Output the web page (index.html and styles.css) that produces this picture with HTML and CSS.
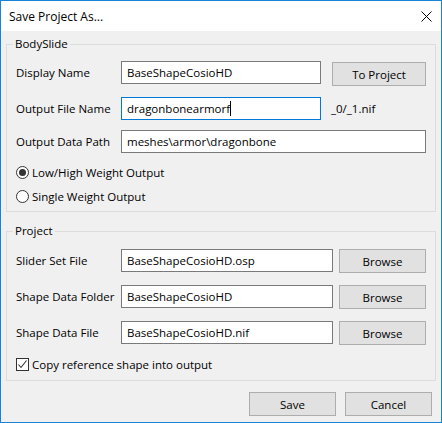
FILE: index.html
```html
<!DOCTYPE html>
<html>
<head>
<meta charset="utf-8">
<link rel="stylesheet" href="styles.css">
</head>
<body>
<div class="window">
  <div class="titlebar">
    <span class="title">Save Project As...</span>
    <svg class="close" width="11" height="11" viewBox="0 0 11 11"><path d="M0.5 0.5L10.5 10.5M10.5 0.5L0.5 10.5" stroke="#000" stroke-width="1" fill="none"/></svg>
  </div>
  <div class="content">
    <fieldset class="group group-bs">
      <legend>BodySlide</legend>
      <div class="row">
        <span class="lbl">Display Name</span>
        <div class="field w200">BaseShapeCosioHD</div>
        <div class="btn btn-toproj">To Project</div>
      </div>
      <div class="row row-2">
        <span class="lbl">Output File Name</span>
        <div class="field field-focus w200">dragonbonearmorf<span class="caret"></span></div>
        <span class="suffix">_0/_1.nif</span>
      </div>
      <div class="row row-3">
        <span class="lbl">Output Data Path</span>
        <div class="field w305">meshes\armor\dragonbone</div>
      </div>
      <div class="radios">
        <div class="opt"><span class="radio radio-on"></span><span>Low/High Weight Output</span></div>
        <div class="opt"><span class="radio"></span><span>Single Weight Output</span></div>
      </div>
    </fieldset>
    <fieldset class="group group-proj">
      <legend>Project</legend>
      <div class="row">
        <span class="lbl">Slider Set File</span>
        <div class="field w212">BaseShapeCosioHD.osp</div>
        <div class="btn btn-browse">Browse</div>
      </div>
      <div class="row row-p">
        <span class="lbl">Shape Data Folder</span>
        <div class="field w212">BaseShapeCosioHD</div>
        <div class="btn btn-browse">Browse</div>
      </div>
      <div class="row row-p">
        <span class="lbl">Shape Data File</span>
        <div class="field w212">BaseShapeCosioHD.nif</div>
        <div class="btn btn-browse">Browse</div>
      </div>
      <div class="opt opt-check">
        <span class="check"><svg width="11" height="11" viewBox="0 0 11 11"><path d="M1.5 5.5L4 8.5L9.5 1.5" stroke="#333" stroke-width="1.1" fill="none"/></svg></span>
        <span>Copy reference shape into output</span>
      </div>
    </fieldset>
    <div class="footer">
      <div class="btn btn-dlg">Save</div>
      <div class="btn btn-dlg">Cancel</div>
    </div>
  </div>
</div>
</body>
</html>
```

FILE: styles.css
```css
html, body {
  margin: 0;
  padding: 0;
}
body {
  font-family: "Open Sans", "Noto Sans", sans-serif;
  font-size: 11.5px;
  color: #000;
}
.window {
  width: 442px;
  height: 423px;
  box-sizing: border-box;
  border: 1px solid #1883d7;
  background: #f0f0f0;
  display: flex;
  flex-direction: column;
}
.titlebar {
  height: 30px;
  background: #fff;
  display: flex;
  align-items: center;
  justify-content: space-between;
  padding: 0 9px 0 8px;
}
.title {
  font-size: 12px;
}
.close {
  display: block;
}
.content {
  padding: 5px 5px 0;
  display: flex;
  flex-direction: column;
}
.group {
  margin: 0;
  min-width: 0;
  border: 1px solid #dcdcdc;
  padding: 9px 9px 3px;
}
.group legend {
  padding: 0 2px;
  margin-left: -3px;
  line-height: 16px;
  height: 16px;
}
.group-proj {
  margin-top: 11px;
  padding-top: 10px;
  padding-bottom: 4px;
}
.row {
  display: flex;
  align-items: flex-start;
  height: 23px;
}
.row-2 { margin-top: 13px; }
.row-3 { margin-top: 10px; }
.row-p { margin-top: 13px; }
.lbl {
  width: 105px;
  flex: none;
  line-height: 23px;
}
.field {
  box-sizing: border-box;
  height: 23px;
  border: 1px solid #7a7a7a;
  background: #fff;
  padding: 0 5px;
  line-height: 21px;
  white-space: nowrap;
  overflow: hidden;
  flex: none;
}
.field-focus {
  border-color: #0078d7;
}
.caret {
  display: inline-block;
  width: 1px;
  height: 15px;
  background: #000;
  vertical-align: -3px;
}
.w200 { width: 200px; }
.w305 { width: 305px; }
.w212 { width: 212px; }
.suffix {
  margin-left: 10px;
  line-height: 23px;
}
.btn {
  box-sizing: border-box;
  height: 24px;
  border: 1px solid #adadad;
  background: #e1e1e1;
  display: flex;
  align-items: center;
  justify-content: center;
  flex: none;
}
.btn-toproj {
  width: 94px;
  margin-left: 11px;
  margin-top: 1px;
}
.btn-browse {
  width: 87px;
  margin-left: 6px;
}
.radios {
  margin-top: 7px;
}
.opt {
  display: flex;
  align-items: center;
  height: 24px;
  gap: 3px;
}
.radio {
  box-sizing: border-box;
  width: 13px;
  height: 13px;
  border: 1px solid #333;
  border-radius: 50%;
  background: #fff;
  display: flex;
  align-items: center;
  justify-content: center;
}
.radio-on::after {
  content: "";
  width: 7px;
  height: 7px;
  border-radius: 50%;
  background: #333;
}
.opt-check {
  margin-top: 8px;
}
.check {
  box-sizing: border-box;
  width: 13px;
  height: 13px;
  border: 1px solid #333;
  background: #fff;
  display: flex;
  align-items: center;
  justify-content: center;
}
.check svg {
  display: block;
}
.footer {
  margin-top: 11px;
  display: flex;
  justify-content: flex-end;
  gap: 9px;
  padding-right: 4px;
}
.btn-dlg {
  width: 87px;
}
```
